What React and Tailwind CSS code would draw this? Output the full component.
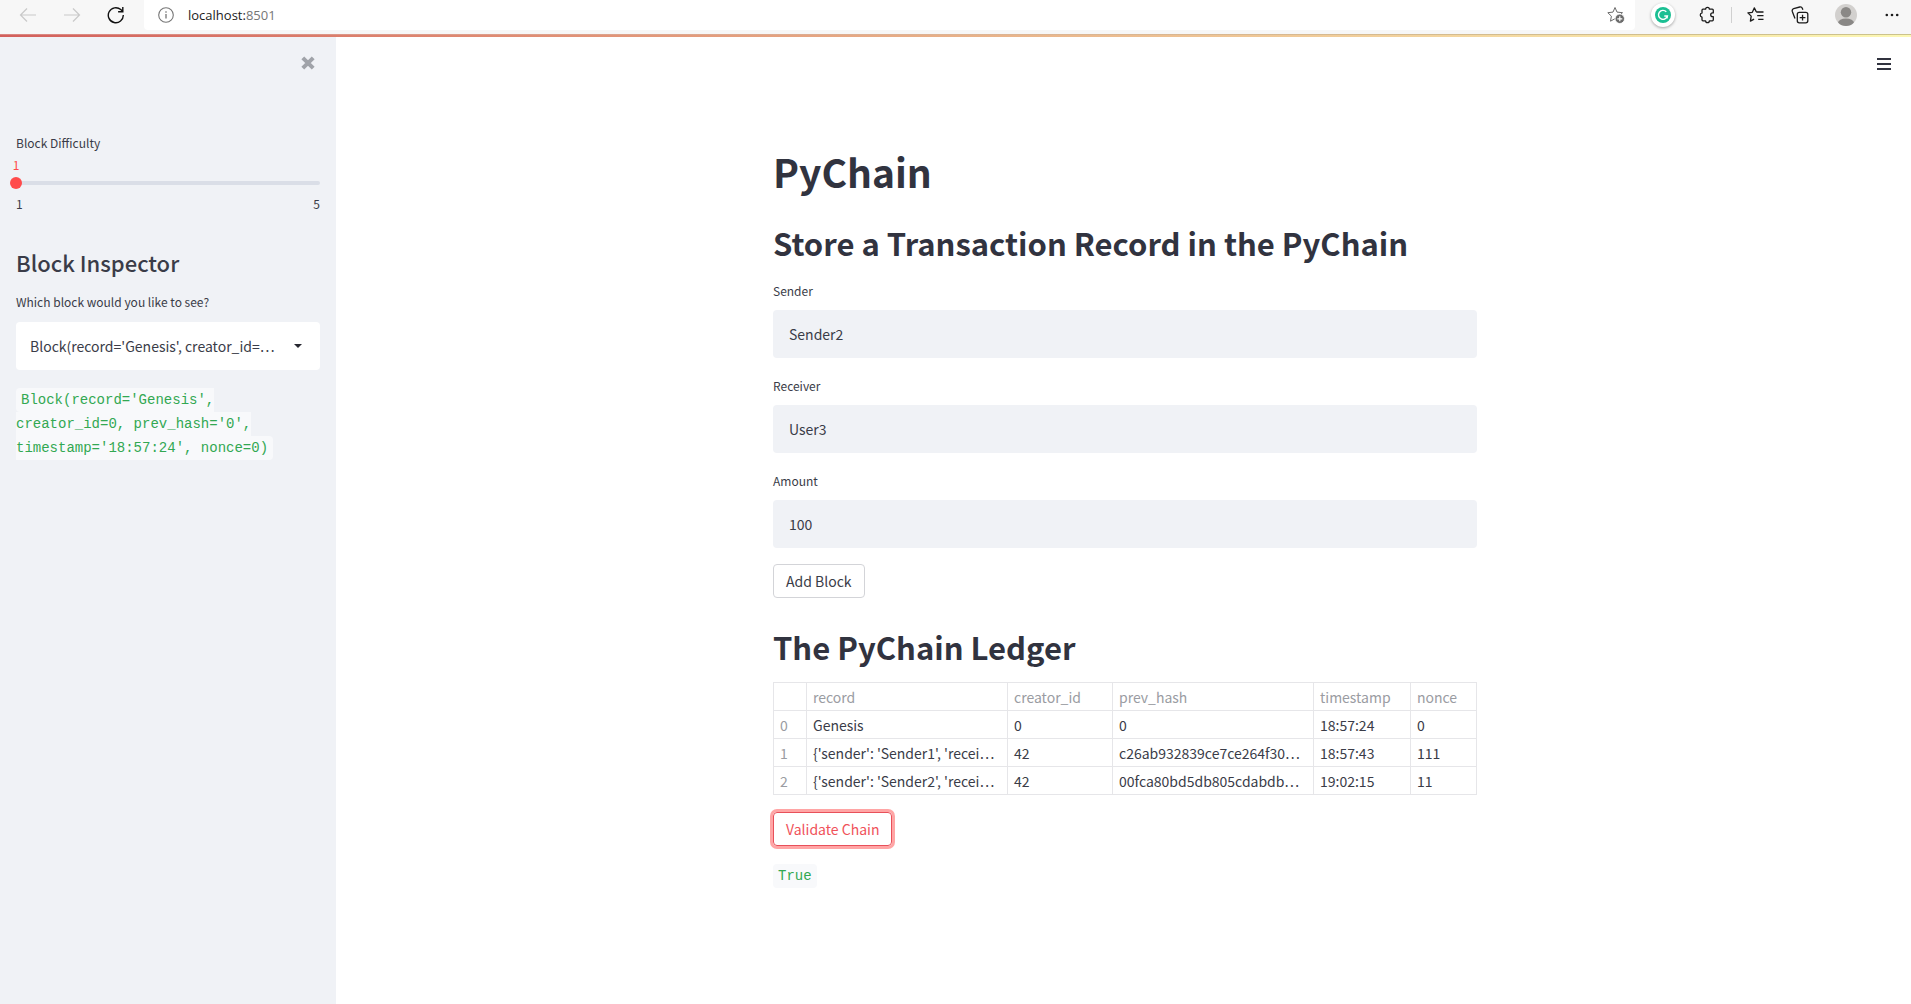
import { useState } from "react";

const CODE = "rounded bg-[#f8f9fb] px-[5px] py-1 text-[#32a852]";
const CODE_LINE = "mt-[18px] font-['Liberation_Mono',monospace] text-[14px] leading-6";

function ToolbarButton({ label, children }) {
  return (
    <button type="button" aria-label={label} className="flex size-7 shrink-0 items-center justify-center">
      {children}
    </button>
  );
}

function BrowserBar() {
  return (
    <header className="flex h-[34px] items-start bg-[#f7f7f7] text-[#1b1b1b]">
      <nav aria-label="Browser" className="flex w-36 shrink-0 items-center gap-4 pt-px pl-[14px]">
        <ToolbarButton label="Back">
          <svg width="18" height="16" viewBox="0 0 18 16" fill="none" stroke="#c9c9c9" strokeWidth="1.2">
            <path d="M17 8H1.5M8 1.5 1.5 8 8 14.5" />
          </svg>
        </ToolbarButton>
        <ToolbarButton label="Forward">
          <svg width="18" height="16" viewBox="0 0 18 16" fill="none" stroke="#c9c9c9" strokeWidth="1.2">
            <path d="M1 8h15.5M10 1.5 16.5 8 10 14.5" />
          </svg>
        </ToolbarButton>
        <ToolbarButton label="Refresh">
          <svg width="18" height="18" viewBox="0 0 18 18" fill="none" stroke="#111" strokeWidth="1.4">
            <path d="M16.300 9A7.500 7.500 0 1 1 13.800 3.600L15.500 5.200M15.800 1v4.700h-4.700" />
          </svg>
        </ToolbarButton>
      </nav>
      <div className="flex h-[30px] flex-1 items-center rounded-b bg-white pl-[14px] pr-[5px]">
        <svg width="16" height="16" viewBox="0 0 16 16" fill="none" stroke="#767676" strokeWidth="1.1">
          <circle cx="8" cy="8" r="7.3" />
          <path d="M8 7v4.500M8 4.300v1.400" strokeWidth="1.3" />
        </svg>
        <div className="ml-[14px] flex-1 font-['Open_Sans',sans-serif] text-[13px] leading-[18px]">
          localhost:<span className="text-[#767676]">8501</span>
        </div>
        <ToolbarButton label="Add to favorites">
          <svg width="18" height="18" viewBox="0 0 18 18" fill="none">
            <path d="m8 1.500 2 4.600 5.500.6-3.900 3.700 1 4.800L8 12.700l-4.500 2.500.9-5L.8 6.700l5.200-.6z" stroke="#6b6b6b" strokeLinejoin="round" />
            <circle cx="12.800" cy="12.800" r="4.700" fill="#6b6b6b" stroke="#fff" strokeWidth=".8" />
            <path d="M12.800 10.300v5M10.300 12.800h5" stroke="#fff" strokeWidth="1.2" />
          </svg>
        </ToolbarButton>
      </div>
      <div className="flex w-[276px] shrink-0 items-center pl-[14px] pt-px">
        <ToolbarButton label="Grammarly">
          <span className="flex size-6 items-center justify-center rounded-full bg-white shadow-[0_1px_3px_#0005]">
            <svg width="16" height="16" viewBox="0 0 16 16" fill="none">
              <circle cx="8" cy="8" r="8" fill="#1bbf93" />
              <path d="M11.300 4.800A4.500 4.500 0 1 0 12.400 9H9.300M12.400 9l-.4 2.400" stroke="#fff" strokeWidth="1.4" />
            </svg>
          </span>
        </ToolbarButton>
        <span className="w-4" />
        <ToolbarButton label="Extensions">
          <svg width="16" height="18" viewBox="0 0 16 18" fill="none" stroke="#1b1b1b" strokeWidth="1.3" strokeLinejoin="round">
            <path d="M4 3.200h2.600a1.900 1.900 0 0 1 3.800 0h2.900q1 0 1 1v2.700h-.7a1.900 1.900 0 0 0 0 3.800h.7v3.100q0 1-1 1h-2.900a1.900 1.900 0 0 1-3.800 0H4q-1 0-1-1v-2.600a2.200 2.200 0 0 1 0-4.300V4.200q0-1 1-1z" />
          </svg>
        </ToolbarButton>
        <span className="mx-2.5 h-4 w-px bg-[#d0d0d0]" />
        <ToolbarButton label="Favorites">
          <svg width="18" height="16" viewBox="0 0 18 16" fill="none" stroke="#1b1b1b" strokeWidth="1.3" strokeLinejoin="round">
            <path d="M9.200 4.600 7.300.900 5.300 5.300.900 5.900l3.300 3.200-.8 5 3.700-2M9.200 5h7.300M10.200 8.700h6.300M11.200 12.400h5.300" />
          </svg>
        </ToolbarButton>
        <span className="w-4" />
        <ToolbarButton label="Collections">
          <svg width="18" height="18" viewBox="0 0 18 18" fill="none" stroke="#1b1b1b" strokeWidth="1.3" strokeLinejoin="round">
            <rect x="6.300" y="6.300" width="10.500" height="10.500" rx="2" />
            <path d="M11.550 8.700v5.700M8.700 11.550h5.700M4 12.500 1.300 5.400Q.7 3.300 2.700 2.600L8.800 1q1.800-.4 2.500 1.300l.6 1.500" />
          </svg>
        </ToolbarButton>
        <span className="w-[18px]" />
        <ToolbarButton label="Profile">
          <svg width="22" height="22" viewBox="0 0 22 22">
            <clipPath id="avatar"><circle cx="11" cy="11" r="11" /></clipPath>
            <g clipPath="url(#avatar)">
              <rect width="22" height="22" fill="#d2d0ce" />
              <circle cx="11" cy="8.200" r="5.200" fill="#8a8886" />
              <ellipse cx="11" cy="19" rx="8" ry="4.500" fill="#8a8886" />
            </g>
          </svg>
        </ToolbarButton>
        <span className="w-[18px]" />
        <ToolbarButton label="Settings and more">
          <svg width="14" height="4" viewBox="0 0 14 4" fill="#1b1b1b">
            <circle cx="1.800" cy="2" r="1.300" />
            <circle cx="7" cy="2" r="1.300" />
            <circle cx="12.200" cy="2" r="1.300" />
          </svg>
        </ToolbarButton>
      </div>
    </header>
  );
}

function Sidebar() {
  const [difficulty, setDifficulty] = useState(1);
  return (
    <aside className="w-[336px] shrink-0 bg-[#f0f2f6] px-4">
      <div className="flex h-24 justify-end pt-[14px]">
        <button type="button" aria-label="Close sidebar" className="flex size-6 items-center justify-center">
          <svg width="14" height="14" viewBox="0 0 14 14" stroke="#a0a3a9" strokeWidth="4">
            <path d="m1.800 1.800 10.400 10.400M12.200 1.800 1.800 12.200" />
          </svg>
        </button>
      </div>
      <label htmlFor="difficulty" className="block text-[12px] leading-5">Block Difficulty</label>
      <div className="mt-0.5 -ml-2 w-4 text-center text-[12px] leading-5 text-[#ff4b4b]">{difficulty}</div>
      <div className="grid h-4 items-center">
        <div className="col-start-1 row-start-1 h-1 rounded-sm bg-[#dadee7]" />
        <input
          id="difficulty"
          type="range"
          min="1"
          max="5"
          value={difficulty}
          onChange={(e) => setDifficulty(Number(e.target.value))}
          className="col-start-1 row-start-1 -mx-1.5 h-3 appearance-none bg-transparent [&::-webkit-slider-thumb]:size-3 [&::-webkit-slider-thumb]:appearance-none [&::-webkit-slider-thumb]:rounded-full [&::-webkit-slider-thumb]:bg-[#ff4b4b]"
        />
      </div>
      <div className="mt-[3px] flex justify-between text-[12px] leading-5">
        <span>1</span>
        <span>5</span>
      </div>
      <h2 className="mt-[33px] text-[22px] font-medium leading-[30px]">Block Inspector</h2>
      <label htmlFor="block" className="mt-[15px] block text-[12px] leading-5">Which block would you like to see?</label>
      <div className="mt-2.5 grid items-center">
        <select id="block" className="col-start-1 row-start-1 h-12 w-full appearance-none rounded bg-white pl-[14px] pr-9 text-[14px]">
          <option>Block(record='Genesis', creator_id=…</option>
        </select>
        <svg width="8" height="4" viewBox="0 0 8 4" fill="#262730" className="pointer-events-none col-start-1 row-start-1 mr-[18px] justify-self-end">
          <path d="M0 0h8L4 4z" />
        </svg>
      </div>
      <p className={CODE_LINE}>
        <code className={`font-['Liberation_Mono',monospace] text-[14px] ${CODE}`}>Block(record='Genesis', creator_id=0, prev_hash='0', timestamp='18:57:24', nonce=0)</code>
      </p>
    </aside>
  );
}

function TextField({ id, label, initial }) {
  const [value, setValue] = useState(initial);
  return (
    <div>
      <label htmlFor={id} className="block text-[12px] leading-5">{label}</label>
      <input
        id={id}
        type="text"
        value={value}
        onChange={(e) => setValue(e.target.value)}
        className="mt-[9px] block h-12 w-full rounded bg-[#f0f2f6] px-4 text-[14px] leading-6"
      />
    </div>
  );
}

const COLUMNS = ["record", "creator_id", "prev_hash", "timestamp", "nonce"];
const ROWS = [
  ["Genesis", "0", "0", "18:57:24", "0"],
  ["{'sender': 'Sender1', 'recei…", "42", "c26ab932839ce7ce264f30…", "18:57:43", "111"],
  ["{'sender': 'Sender2', 'recei…", "42", "00fca80bd5db805cdabdb…", "19:02:15", "11"],
];
const CELL = "h-7 whitespace-nowrap border border-[#e6e6e9] pl-1.5 text-left text-[14px] font-normal leading-5";

function Ledger() {
  return (
    <table className="mt-4 w-full table-fixed border-collapse">
      <colgroup>
        <col className="w-[33px]" />
        <col className="w-[201px]" />
        <col className="w-[105px]" />
        <col className="w-[201px]" />
        <col className="w-[97px]" />
        <col />
      </colgroup>
      <thead className="text-[#9a9ca2]">
        <tr>
          <td className={CELL} />
          {COLUMNS.map((name) => <th key={name} scope="col" className={CELL}>{name}</th>)}
        </tr>
      </thead>
      <tbody>
        {ROWS.map((row, index) => (
          <tr key={index}>
            <th scope="row" className={CELL}><span className="text-[#9a9ca2]">{index}</span></th>
            {row.map((text, i) => <td key={i} className={CELL}>{text}</td>)}
          </tr>
        ))}
      </tbody>
    </table>
  );
}

export default function App() {
  return (
    <div className="flex min-h-screen flex-col bg-white font-['Noto_Sans_CJK_SC',sans-serif] text-[#3a3c48]">
      <BrowserBar />
      <div className="h-px bg-linear-to-r from-[#d98580] via-[#dcb394] to-[#cbc38c]" />
      <div className="h-0.5 bg-linear-to-r from-[#d3605c] via-[#e8b088] to-[#fcf8b4]" />
      <div className="flex flex-1">
        <Sidebar />
        <div className="flex flex-1 flex-col">
          <div className="flex h-14 justify-end pt-[15px] pr-[15px]">
            <button type="button" aria-label="Menu" className="flex size-6 items-center justify-center">
              <svg width="14" height="14" viewBox="0 0 14 14" stroke="#31333f" strokeWidth="2">
                <path d="M0 2h14M0 7h14M0 12h14" />
              </svg>
            </button>
          </div>
          <main className="mx-auto w-full max-w-[739px] pt-[55px] pl-[19px] pr-4">
            <h1 className="text-[39px] font-bold leading-[46px] text-[#31333f]">PyChain</h1>
            <h2 className="mt-[30px] text-[31px] font-bold leading-[38px] text-[#31333f]">Store a Transaction Record in the PyChain</h2>
            <div className="mt-[19px] flex flex-col gap-[18px]">
              <TextField id="sender" label="Sender" initial="Sender2" />
              <TextField id="receiver" label="Receiver" initial="User3" />
              <TextField id="amount" label="Amount" initial="100" />
            </div>
            <button type="button" className="mt-4 block h-[34px] rounded border border-[#d3d4d8] px-3 text-[14px] leading-6">Add Block</button>
            <h2 className="mt-[30px] text-[31px] font-bold leading-[38px] text-[#31333f]">The PyChain Ledger</h2>
            <Ledger />
            <button type="button" className="mt-[17px] block h-[34px] rounded border border-[#e8505a] px-3 text-[14px] leading-6 text-[#f0525a] ring-3 ring-[#ff4b4b]/50">Validate Chain</button>
            <p className={CODE_LINE}><code className={`font-['Liberation_Mono',monospace] text-[14px] ${CODE}`}>True</code></p>
          </main>
        </div>
      </div>
    </div>
  );
}
